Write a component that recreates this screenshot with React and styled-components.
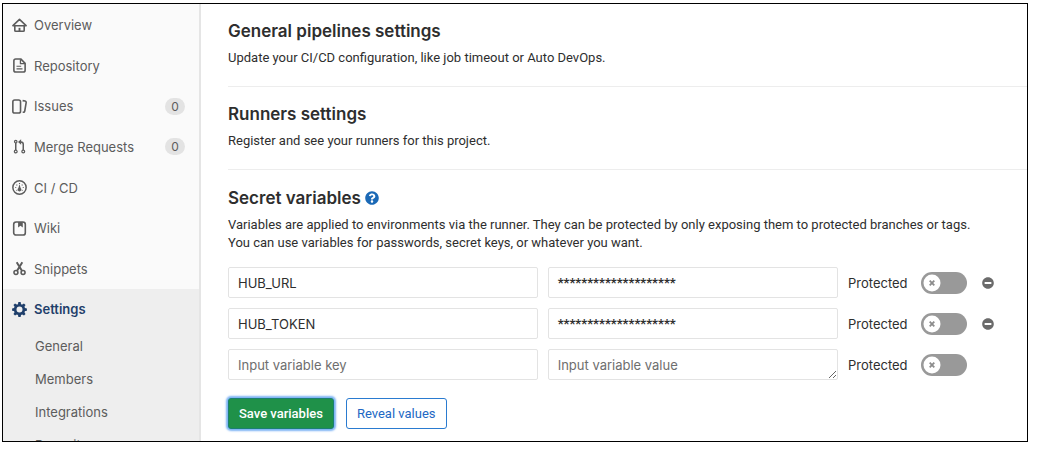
import React from "react";
import styled, { createGlobalStyle, css } from "styled-components";
import { FaMinusCircle, FaQuestionCircle } from "react-icons/fa";

const GlobalStyle = createGlobalStyle`
  *, *::before, *::after { box-sizing: border-box; }
  body {
    margin: 0;
    background: #fff;
    color: #2e2e2e;
    font: 13px/18px Inter, "Liberation Sans", sans-serif;
  }
  button, input, textarea { font: inherit; color: inherit; }
`;

const Frame = styled.div`
  display: flex;
  margin: 3px 21px 12px 2px;
  border: 1px solid #000;
`;

/* The sidebar takes the height of the main column and clips the rest of its menu. */
const Sidebar = styled.nav`
  contain: size;
  flex: none;
  width: 198px;
  overflow: hidden;
  background: #fafafa;
  border-right: 2px solid #e5e5e5;
`;

const Menu = styled.ul`
  display: flex;
  flex-direction: column;
  justify-content: space-between;
  height: 284px;
  margin: 1px 0 0;
  padding: 0;
  list-style: none;
`;

const NavLink = styled.a`
  display: flex;
  align-items: center;
  gap: 7px;
  height: 40px;
  padding: 0 14px 0 9px;
  color: ${(p) => (p.$active ? "#1f3f6b" : "#5c5c5c")};
  font-weight: ${(p) => (p.$active ? 600 : 400)};
  text-decoration: none;
  svg { flex: none; width: 15px; height: 15px; }
`;

const Count = styled.span`
  margin-left: auto;
  width: 20px;
  border-radius: 9px;
  background: #e3e3e3;
  font-size: 12px;
  line-height: 17px;
  text-align: center;
`;

const ActiveGroup = styled.div`
  background: #eee;
`;

const SubMenu = styled.ul`
  margin: 0;
  padding: 1px 0 12px;
  list-style: none;
`;

const SubLink = styled.a`
  display: block;
  padding-left: 32px;
  color: #5c5c5c;
  line-height: 33px;
  text-decoration: none;
`;

const Main = styled.main`
  flex: 1;
  min-width: 0;
  padding: 0 0 12px 27px;
`;

const Section = styled.section`
  padding: 15px 28px 19px 0;
  & + & { border-top: 1px solid #ededed; }
  &:last-child { padding-top: 16px; padding-bottom: 0; }
`;

const Title = styled.h2`
  display: flex;
  align-items: center;
  gap: 4px;
  margin: 0 0 6px;
  font-size: 17px;
  line-height: 24px;
  font-weight: 600;
`;

const HelpLink = styled.a`
  display: flex;
  color: #1b69b6;
  font-size: 14px;
`;

const Text = styled.p`
  margin: 0;
  font-family: Roboto, "Liberation Sans", sans-serif;
`;

const Form = styled.form`
  margin-top: 15px;
`;

const VariableRow = styled.div`
  display: flex;
  align-items: center;
  gap: 10px;
  margin-bottom: 10px;
`;

const field = css`
  min-width: 0;
  height: 31px;
  margin: 0;
  padding: 6px 9px;
  border: 1px solid #e3e3e3;
  border-radius: 2px;
  background: #fff;
  &::placeholder { color: #6e6e6e; opacity: 1; }
`;

const KeyInput = styled.input`
  ${field}
  flex: 15 1 0;
`;

const ValueInput = styled.textarea`
  ${field}
  flex: 14 1 0;
  overflow: hidden;
  resize: none;
  ${(p) => (p.$masked ? css`font-family: Roboto, sans-serif; font-weight: 700;` : css`resize: both;`)}
`;

const ProtectedLabel = styled.label`
  flex: none;
  width: 63px;
`;

const Switch = styled.span`
  display: grid;
  flex: none;
  > * { grid-area: 1 / 1; }
  svg { pointer-events: none; }
`;

const SwitchInput = styled.input`
  appearance: none;
  width: 46px;
  height: 22px;
  margin: 0;
  border-radius: 11px;
  background: #999;
`;

const RemoveSlot = styled.span`
  flex: none;
  width: 22px;
`;

const RemoveButton = styled.button`
  display: flex;
  justify-content: center;
  width: 100%;
  padding: 5px 0;
  border: 0;
  background: none;
  color: #6b6b6b;
  font-size: 12px;
`;

const Actions = styled.div`
  display: flex;
  gap: 12px;
  margin-top: 18px;
`;

const Button = styled.button`
  height: 31px;
  padding: 0 10px;
  border: 1px solid #2a7bd0;
  border-radius: 3px;
  background: #fff;
  color: #2268c4;
  font-family: Roboto, "Liberation Sans", sans-serif;
  ${(p) =>
    p.$primary &&
    css`
      border-color: #1b7f72;
      background: #1f9149;
      color: #fff;
      font-weight: 500;
      box-shadow: 0 0 2px 2px #7db4f5;
    `}
`;

const Icon = ({ children }) => (
  <svg viewBox="0 0 16 16" fill="none" stroke="currentColor" strokeWidth="1.7" strokeLinejoin="round" aria-hidden="true">
    {children}
  </svg>
);

const icons = {
  home: (
    <Icon>
      <path d="M1 8.2 8 1.5l7 6.7H1Z" />
      <path d="M3 8.5v4.7q0 1 1 1h8q1 0 1-1V8.5" />
      <path d="M8 14v-3.5" strokeWidth="2" />
    </Icon>
  ),
  doc: (
    <Icon>
      <path d="M9.3 1H4Q2 1 2 3v10q0 2 2 2h8q2 0 2-2V5.7L9.3 1Z" />
      <path d="M9 1.2V6h4.8" strokeWidth="1.4" />
      <path d="M4.8 8.8h5M4.8 11.5h6.4" strokeWidth="1.3" />
    </Icon>
  ),
  issues: (
    <Icon>
      <rect x="0.9" y="1" width="8.2" height="14" rx="2" />
      <path d="M11.3 1.7 14 2.2q1.3.3 1.1 1.6l-1.5 9q-.2 1.3-1.5 1.3h-.7" />
    </Icon>
  ),
  merge: (
    <Icon>
      <g strokeWidth="1.3">
        <circle cx="4" cy="2.8" r="1.3" />
        <circle cx="4" cy="13.4" r="1.5" />
        <circle cx="12" cy="13.4" r="1.5" />
        <path d="M4 4.3v7.4M12 11.7V5.5q0-2.4-2.5-2.4H9" strokeWidth="1.6" />
      </g>
      <path d="M9.7.2v5.8L6.4 3.1Z" fill="currentColor" stroke="none" />
    </Icon>
  ),
  gauge: (
    <Icon>
      <circle cx="8" cy="8" r="7.1" strokeWidth="1.6" />
      <path d="M8 3.2v1M3.5 8h1M11.5 8h1M4.8 4.9l.8.8M11.2 4.9l-.8.8M4.8 11.4l.7-.7M11.2 11.4l-.7-.7" strokeWidth="1.2" />
      <path d="m8 4.6 1.2 3.8a2 2 0 1 1-2.4 0Z" fill="currentColor" stroke="none" />
    </Icon>
  ),
  book: (
    <Icon>
      <rect x="1.8" y="1" width="12.4" height="14" rx="2.6" />
      <path d="M6.5 1h5v5.8L9 5 6.5 6.8Z" fill="currentColor" stroke="none" />
    </Icon>
  ),
  scissors: (
    <Icon>
      <circle cx="4.2" cy="12.2" r="2.1" />
      <circle cx="11.8" cy="12.2" r="2.1" />
      <path d="M5 1.3 10.6 10.4M11 1.3 5.4 10.4" strokeWidth="2.1" />
    </Icon>
  ),
  settings: (
    <Icon>
      <circle cx="8" cy="8" r="4.6" strokeWidth="2.8" />
      {[0, 45, 90, 135, 180, 225, 270, 315].map((a) => (
        <path key={a} d="M6.2 3.2 6.8.1h2.4l.6 3.1Z" fill="currentColor" stroke="none" transform={`rotate(${a} 8 8)`} />
      ))}
    </Icon>
  ),
};

const menu = [
  ["Overview", "home"],
  ["Repository", "doc"],
  ["Issues", "issues", 0],
  ["Merge Requests", "merge", 0],
  ["CI / CD", "gauge"],
  ["Wiki", "book"],
  ["Snippets", "scissors"],
];

const masked = "*".repeat(20);
const variables = [
  { key: "HUB_URL", value: masked },
  { key: "HUB_TOKEN", value: masked },
  { key: "", value: "" },
];

function Variable({ id, item }) {
  const saved = item.key !== "";
  return (
    <VariableRow>
      <KeyInput aria-label="Variable key" defaultValue={item.key} placeholder="Input variable key" />
      <ValueInput
        aria-label="Variable value"
        rows={1}
        defaultValue={item.value}
        placeholder="Input variable value"
        spellCheck={false}
        $masked={saved}
      />
      <ProtectedLabel htmlFor={id}>Protected</ProtectedLabel>
      <Switch>
        <SwitchInput type="checkbox" role="switch" id={id} />
        <svg width="22" height="22" viewBox="0 0 22 22" aria-hidden="true">
          <circle cx="11" cy="11" r="8.5" fill="#fff" />
          <path d="m8.7 8.7 4.6 4.6m0-4.6-4.6 4.6" stroke="#8c8c8c" strokeWidth="1.8" />
        </svg>
      </Switch>
      <RemoveSlot>
        {saved && (
          <RemoveButton type="button" aria-label="Remove variable">
            <FaMinusCircle />
          </RemoveButton>
        )}
      </RemoveSlot>
    </VariableRow>
  );
}

export default function App() {
  return (
    <>
      <GlobalStyle />
      <Frame>
        <Sidebar>
          <Menu>
            {menu.map(([label, icon, count]) => (
              <li key={label}>
                <NavLink href="#">
                  {icons[icon]}
                  {label}
                  {count !== undefined && <Count>{count}</Count>}
                </NavLink>
              </li>
            ))}
          </Menu>
          <ActiveGroup>
            <NavLink href="#" $active>
              {icons.settings}
              Settings
            </NavLink>
            <SubMenu>
              {["General", "Members", "Integrations", "Repository"].map((label) => (
                <li key={label}>
                  <SubLink href="#">{label}</SubLink>
                </li>
              ))}
            </SubMenu>
          </ActiveGroup>
        </Sidebar>
        <Main>
          <Section>
            <Title>General pipelines settings</Title>
            <Text>Update your CI/CD configuration, like job timeout or Auto DevOps.</Text>
          </Section>
          <Section>
            <Title>Runners settings</Title>
            <Text>Register and see your runners for this project.</Text>
          </Section>
          <Section>
            <Title>
              Secret variables
              <HelpLink href="#" aria-label="Help">
                <FaQuestionCircle />
              </HelpLink>
            </Title>
            <Text>
              Variables are applied to environments via the runner. They can be protected by only exposing them to
              protected branches or tags.
              <br />
              You can use variables for passwords, secret keys, or whatever you want.
            </Text>
            <Form onSubmit={(e) => e.preventDefault()}>
              {variables.map((item, i) => (
                <Variable key={i} id={`protected-${i}`} item={item} />
              ))}
              <Actions>
                <Button type="submit" $primary>
                  Save variables
                </Button>
                <Button type="button">Reveal values</Button>
              </Actions>
            </Form>
          </Section>
        </Main>
      </Frame>
    </>
  );
}
